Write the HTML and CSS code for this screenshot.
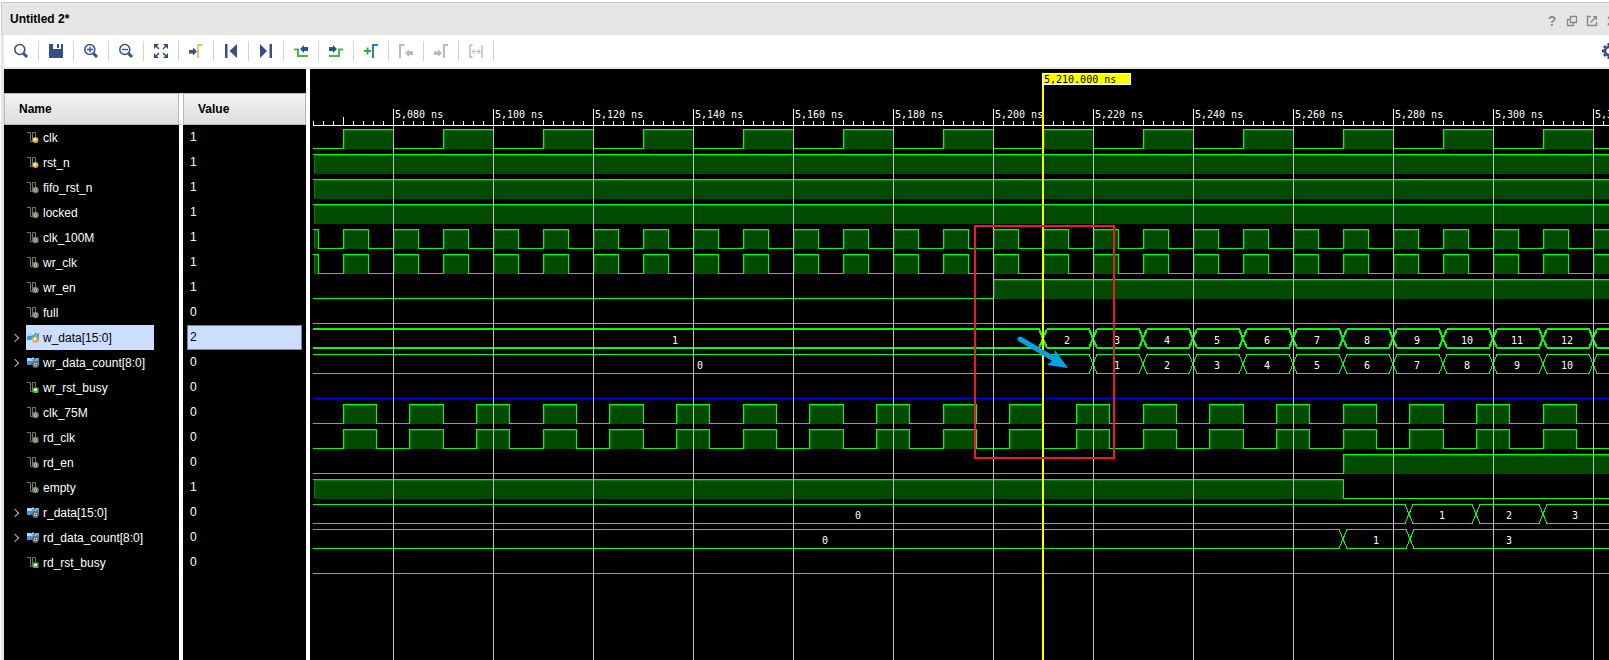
FILE: index.html
```html
<!DOCTYPE html>
<html lang="en">
<head>
<meta charset="utf-8">
<title>Untitled 2*</title>
<link rel="stylesheet" href="styles.css">
</head>
<body>
<svg class="defs" aria-hidden="true">
  <symbol id="wire" viewBox="0 0 12 12">
    <path d="M0 .5H3.500V9.500H6.500M5.500 9V.5H8.500V5" fill="none" stroke="#5f8550"/>
  </symbol>
  <symbol id="sig-in" viewBox="0 0 12 12">
    <use href="#wire"/><circle cx="8.500" cy="8" r="3" fill="#d9a441"/><circle cx="8" cy="7.500" r="1.500" fill="#fff0b8"/>
  </symbol>
  <symbol id="sig-int" viewBox="0 0 12 12">
    <use href="#wire"/><circle cx="8.500" cy="8" r="3.200" fill="#777"/><circle cx="8.500" cy="8" r="1.700" fill="#ccc"/><circle cx="8.500" cy="8" r=".8" fill="#333"/>
  </symbol>
  <symbol id="sig-out" viewBox="0 0 12 12">
    <use href="#wire"/><rect x="6" y="5.500" width="5.500" height="5.500" rx="1" fill="#55b04a"/><rect x="7" y="6.500" width="3" height="2.500" fill="#d9f5cf"/>
  </symbol>
  <symbol id="bus" viewBox="0 0 12 12">
    <path d="M0 1H4L6 3 8 1H12V8H8L6 6 4 8H0Z" fill="#3f9bd8"/><path d="M0 1H4L6 3.500 4 4H0Z" fill="#a5dcf8"/><path d="M5 1H7L6 2.500ZM7 5L11 1" fill="#fff" stroke="#dff3ff" stroke-width=".7"/>
  </symbol>
  <symbol id="bus-in" viewBox="0 0 12 12">
    <use href="#bus"/><circle cx="8.500" cy="7.500" r="3.200" fill="#e0a83c"/><circle cx="8" cy="7" r="1.600" fill="#fff0b8"/>
  </symbol>
  <symbol id="bus-int" viewBox="0 0 12 12">
    <use href="#bus"/><circle cx="8.500" cy="7.500" r="3.400" fill="#666"/><circle cx="8.500" cy="7.500" r="1.800" fill="#ccc"/><circle cx="8.500" cy="7.500" r=".8" fill="#333"/>
  </symbol>
</svg>

<main class="window">
  <header class="titlebar">
    <h1 class="title">Untitled 2*</h1>
    <div class="window-actions">
      <button class="win-btn help" aria-label="Help">?</button>
      <button class="win-btn" aria-label="Restore"><svg viewBox="0 0 12 12"><path d="M4.500 1.500H10.500V7.500H4.500ZM4 4.500H1.500V10.500H7.500V8" fill="none" stroke="#8a8a8a" stroke-width="1.300"/></svg></button>
      <button class="win-btn" aria-label="Float"><svg viewBox="0 0 12 12"><path d="M5 1.500H1.500V10.500H10.500V7M4.500 7.500L9 3" fill="none" stroke="#8a8a8a" stroke-width="1.500"/><path d="M6.500 1H11V5.500Z" fill="#8a8a8a"/></svg></button>
      <button class="win-btn" aria-label="Close"><svg viewBox="0 0 12 12"><path d="M2 2L10 10M10 2L2 10" stroke="#8a8a8a" stroke-width="2"/></svg></button>
    </div>
  </header>

  <div class="toolbar">
    <button class="tool" aria-label="Find"><svg viewBox="0 0 16 16"><circle cx="6.800" cy="6.500" r="5" fill="none" stroke="#34508a" stroke-width="1.600"/><path d="M10.500 10.500L14 14" stroke="#34508a" stroke-width="3"/></svg></button>
    <button class="tool" aria-label="Save"><svg viewBox="0 0 16 16"><path d="M1 1H5V6H13V1H15V15H1ZM9 1H11V5H9Z" fill="#34508a"/></svg></button>
    <button class="tool" aria-label="Zoom in"><svg viewBox="0 0 16 16"><circle cx="6.800" cy="6.500" r="5" fill="none" stroke="#34508a" stroke-width="1.500"/><path d="M10.500 10.500L14 14" stroke="#34508a" stroke-width="3"/><path d="M4 6.500H10M7 3.500V9.500" stroke="#34508a" stroke-width="1.300"/></svg></button>
    <button class="tool" aria-label="Zoom out"><svg viewBox="0 0 16 16"><circle cx="6.800" cy="6.500" r="5" fill="none" stroke="#34508a" stroke-width="1.500"/><path d="M10.500 10.500L14 14" stroke="#34508a" stroke-width="3"/><path d="M4 6.500H10" stroke="#34508a" stroke-width="1.300"/></svg></button>
    <button class="tool" aria-label="Zoom fit"><svg viewBox="0 0 16 16"><path d="M1 1H6L1 6ZM15 1V6L10 1ZM1 15V10L6 15ZM15 15H10L15 10Z" fill="#34508a"/><path d="M3 3L6 6M13 3L10 6M3 13L6 10M13 13L10 10" stroke="#34508a" stroke-width="1.500"/></svg></button>
    <button class="tool" aria-label="Go to cursor"><svg viewBox="0 0 16 16"><path d="M1 7H5V4.500L9 8.500 5 12.500V10.500H1Z" fill="#34508a"/><path d="M10 15V2H14.500" fill="none" stroke="#e0c765" stroke-width="2"/></svg></button>
    <button class="tool" aria-label="Go to start"><svg viewBox="0 0 16 16"><path d="M2 1H4.500V15H2ZM14 1V15L6.500 8Z" fill="#34508a"/></svg></button>
    <button class="tool" aria-label="Go to end"><svg viewBox="0 0 16 16"><path d="M14 1H11.500V15H14ZM2 1V15L9 8Z" fill="#34508a"/></svg></button>
    <button class="tool" aria-label="Previous transition"><svg viewBox="0 0 16 16"><path d="M1 6.500H5V13H15" fill="none" stroke="#48b83c" stroke-width="2"/><path d="M15 4V8H11V10L7 6 11 2V4Z" fill="#34508a"/></svg></button>
    <button class="tool" aria-label="Next transition"><svg viewBox="0 0 16 16"><path d="M1 13H11V6.500H15" fill="none" stroke="#48b83c" stroke-width="2"/><path d="M1 4V8H5V10L9 6 5 2V4Z" fill="#34508a"/></svg></button>
    <button class="tool" aria-label="Add marker"><svg viewBox="0 0 16 16"><path d="M1 8H8M4.500 4.500V11.500" stroke="#36a93c" stroke-width="2"/><path d="M10 15V2H15" fill="none" stroke="#2f7fb8" stroke-width="2"/></svg></button>
    <button class="tool" aria-label="Previous marker" disabled><svg viewBox="0 0 16 16"><path d="M2 15V2H6.500" fill="none" stroke="#bbb" stroke-width="2"/><path d="M15 8V12H11V14L7 10 11 6V8Z" fill="#bbb"/></svg></button>
    <button class="tool" aria-label="Next marker" disabled><svg viewBox="0 0 16 16"><path d="M11 15V2H15" fill="none" stroke="#bbb" stroke-width="2"/><path d="M1 8.500V12H5V14L9 10.300 5 6.500V8.500Z" fill="#bbb"/></svg></button>
    <button class="tool" aria-label="Swap cursors" disabled><svg viewBox="0 0 16 16"><path d="M2 2V15M4.500 2H2M4.500 14H2M14 2V15" fill="none" stroke="#bbb" stroke-width="1.500"/><path d="M4 8.500H12M6.500 6L4 8.500 6.500 11M10 6L12.500 8.500 10 11" fill="none" stroke="#bbb"/></svg></button>
    <button class="settings" aria-label="Settings"><svg viewBox="0 0 16 16"><circle cx="8" cy="8" r="4" fill="none" stroke="#34508a" stroke-width="2.500"/><path d="M8 0V3M8 13V16M1 8H3M13 8H15M3 3L4.500 4.500M11.500 11.500L13 13M3 13L4.500 11.500M13 3L11.500 4.500" stroke="#34508a" stroke-width="3"/></svg></button>
  </div>

  <div class="workspace">
    <section class="signals">
      <table class="signal-table">
        <thead><tr><th scope="col">Name</th><th scope="col">Value</th></tr></thead>
        <tbody>
          <tr><td><div class="name"><svg><use href="#sig-in"/></svg>clk</div></td><td><div class="value">1</div></td></tr>
          <tr><td><div class="name"><svg><use href="#sig-in"/></svg>rst_n</div></td><td><div class="value">1</div></td></tr>
          <tr><td><div class="name"><svg><use href="#sig-int"/></svg>fifo_rst_n</div></td><td><div class="value">1</div></td></tr>
          <tr><td><div class="name"><svg><use href="#sig-int"/></svg>locked</div></td><td><div class="value">1</div></td></tr>
          <tr><td><div class="name"><svg><use href="#sig-int"/></svg>clk_100M</div></td><td><div class="value">1</div></td></tr>
          <tr><td><div class="name"><svg><use href="#sig-int"/></svg>wr_clk</div></td><td><div class="value">1</div></td></tr>
          <tr><td><div class="name"><svg><use href="#sig-int"/></svg>wr_en</div></td><td><div class="value">1</div></td></tr>
          <tr><td><div class="name"><svg><use href="#sig-int"/></svg>full</div></td><td><div class="value">0</div></td></tr>
          <tr class="selected"><td><div class="cell"><button class="expand" aria-label="Expand w_data"></button><div class="name"><svg><use href="#bus-in"/></svg>w_data[15:0]</div></div></td><td><div class="value">2</div></td></tr>
          <tr><td><div class="cell"><button class="expand" aria-label="Expand wr_data_count"></button><div class="name"><svg><use href="#bus-int"/></svg>wr_data_count[8:0]</div></div></td><td><div class="value">0</div></td></tr>
          <tr><td><div class="name"><svg><use href="#sig-out"/></svg>wr_rst_busy</div></td><td><div class="value">0</div></td></tr>
          <tr><td><div class="name"><svg><use href="#sig-int"/></svg>clk_75M</div></td><td><div class="value">0</div></td></tr>
          <tr><td><div class="name"><svg><use href="#sig-int"/></svg>rd_clk</div></td><td><div class="value">0</div></td></tr>
          <tr><td><div class="name"><svg><use href="#sig-int"/></svg>rd_en</div></td><td><div class="value">0</div></td></tr>
          <tr><td><div class="name"><svg><use href="#sig-int"/></svg>empty</div></td><td><div class="value">1</div></td></tr>
          <tr><td><div class="cell"><button class="expand" aria-label="Expand r_data"></button><div class="name"><svg><use href="#bus-int"/></svg>r_data[15:0]</div></div></td><td><div class="value">0</div></td></tr>
          <tr><td><div class="cell"><button class="expand" aria-label="Expand rd_data_count"></button><div class="name"><svg><use href="#bus-int"/></svg>rd_data_count[8:0]</div></div></td><td><div class="value">0</div></td></tr>
          <tr><td><div class="name"><svg><use href="#sig-out"/></svg>rd_rst_busy</div></td><td><div class="value">0</div></td></tr>
          <tr class="filler"><td></td><td></td></tr>
        </tbody>
      </table>
    </section>
    <section class="waves" id="waves" aria-label="Waveforms">
      <svg class="ruler" id="ruler"></svg>
      <div class="tracks" id="tracks"></div>
      <svg class="grid" id="grid"></svg>
      <div class="cursor"><span class="cursor-label">5,210.000 ns</span></div>
      <div class="callout"></div>
      <svg class="arrow" viewBox="0 0 52 36"><path d="M4 5L38 25" stroke="#00a2e8" stroke-width="5" stroke-linecap="round"/><path d="M52 34L39 16 38 23 35 28 31 31Z" fill="#00a2e8"/></svg>
    </section>
  </div>
</main>
<script src="waves.js"></script>
</body>
</html>
```
FILE: styles.css
```css
* { box-sizing: border-box; }

body {
  margin: 0;
  background: #fff;
  color: #000;
  font: 12px/16px "Liberation Sans", Arial, sans-serif;
}

button {
  margin: 0;
  padding: 0;
  border: 0;
  background: none;
  font: inherit;
}

.defs { position: absolute; width: 0; height: 0; }

.window {
  display: flex;
  flex-direction: column;
  height: 100vh;
  overflow: hidden;
  padding: 2px 0 0 1px;
}

.titlebar {
  display: flex;
  flex: none;
  align-items: center;
  justify-content: space-between;
  height: 33px;
  padding-left: 8px;
  background: #e6e6e6;
  border-top: 1px solid #c8c8c8;
  border-left: 1px solid #c8c8c8;
}

.title { margin: 0; font-size: 12px; line-height: 16px; }

.window-actions { display: flex; margin: 4px -13px 0 0; }

.win-btn {
  display: flex;
  align-items: center;
  justify-content: center;
  width: 20px;
  height: 20px;
  color: #8a8a8a;
}
.win-btn svg { width: 12px; height: 12px; }
.help { font-size: 14px; font-weight: bold; }

.toolbar {
  display: flex;
  flex: none;
  align-items: center;
  height: 34px;
  background: #fff;
  border-left: 3px solid #e6e6e6;
  border-bottom: 2px solid #e6e6e6;
}

.tool {
  display: flex;
  align-items: center;
  justify-content: center;
  width: 35px;
  height: 20px;
  border-right: 1px solid #d4d4d4;
}
.tool svg, .settings svg { display: block; width: 16px; height: 16px; }
.settings { margin: 0 -8px 0 auto; }

.workspace {
  display: flex;
  flex: 1;
  min-height: 0;
  border-left: 3px solid #e6e6e6;
}

.signals {
  flex: none;
  width: 302px;
  padding-top: 24px;
  background: #000;
  color: #fff;
}

.signal-table {
  width: 100%;
  height: 100%;
  table-layout: fixed;
  border-collapse: separate;
  border-spacing: 0;
}
.signal-table th {
  width: 123px;
  height: 32px;
  padding: 0 14px;
  color: #000;
  text-align: left;
  background: linear-gradient(#f3f3f3, #dedee0);
  border: 1px solid #b8b8b8;
}
.signal-table th:first-child {
  width: 179px;
  background-clip: padding-box;
  box-shadow: inset -1px 0 #b8b8b8;
}
.signal-table td { height: 25px; padding: 0; }
.signal-table th:first-child, .signal-table td:first-child { border-right: 4px solid #fff; }
.signal-table .filler td { height: auto; }

.cell { display: flex; align-items: center; }
.name {
  display: flex;
  align-items: center;
  gap: 4px;
  width: 128px;
  height: 25px;
  margin-left: 22px;
  padding-left: 1px;
  white-space: nowrap;
}
.name svg { flex: none; width: 12px; height: 12px; }
.cell .name { margin-left: 0; }
.expand {
  display: flex;
  align-items: center;
  width: 22px;
  height: 25px;
  padding-left: 8px;
}
.expand::before {
  content: "";
  width: 5px;
  height: 5px;
  border: solid #b4b4b4;
  border-width: 1px 1px 0 0;
  transform: rotate(45deg);
}
.value {
  height: 25px;
  margin: 0 4px;
  padding: 0 2px;
  line-height: 23px;
  border: 1px solid transparent;
}
.selected .name { color: #000; background: #ccdeff; }
.selected .value { color: #000; background: #ccdeff; border-color: #4a90c4; }

.waves {
  position: relative;
  flex: 1;
  min-width: 0;
  margin-left: 4px;
  overflow: hidden;
  background: #000;
  font: 10px/12px "DejaVu Sans Mono", monospace;
}
.waves svg { display: block; }
.ruler { width: 100%; height: 57px; fill: #fff; shape-rendering: crispEdges; }
.track { width: 100%; height: 25px; shape-rendering: crispEdges; }
.track text { fill: #fff; text-anchor: middle; }
.mask { fill: #000; }
.fill { fill: #004b00; }
.shade { fill: #008000; }
.line { fill: none; stroke: #0f0; }
.line.bold { stroke-width: 2; }
.line.idle { stroke: #00f; }

.grid {
  position: absolute;
  top: 57px;
  left: 0;
  width: 100%;
  height: calc(100% - 57px);
  fill: #c0c0c0;
  shape-rendering: crispEdges;
}

.cursor {
  position: absolute;
  top: 4px;
  bottom: 0;
  left: 732px;
  width: 2px;
  background: #ff0;
}
.cursor-label {
  display: block;
  width: 89px;
  height: 12px;
  padding-left: 1px;
  color: #000;
  line-height: 11px;
  white-space: nowrap;
  background: #ff0;
  border: 1px solid #fff;
}

.callout {
  position: absolute;
  top: 156px;
  left: 664px;
  width: 141px;
  height: 234px;
  border: 2px solid #ed1c24;
}

.arrow {
  position: absolute;
  top: 265px;
  left: 706px;
  width: 52px;
  height: 36px;
}
```
FILE: waves.js
```js
const SVG = 'http://www.w3.org/2000/svg';
const PX_PER_NS = 5;
const LEFT = 3;
const HIGH = 3;
const LOW = 22;

const panel = document.getElementById('waves');
const timeToX = t => Math.floor(83 + (t - 5080) * PX_PER_NS + 0.01);

const clock = (period, duty) => ({ kind: 'clock', period, duty });
const level = (value, changeAt) => ({ kind: 'level', value, changeAt });
const counter = (first, start) => {
  const steps = [[0, first]];
  for (let i = 1; i < 100; i++) steps.push([start + (i - 1) * 10, first + i]);
  return steps;
};

const tracks = [
  clock(20, 10),
  level(1),
  level(1),
  level(1),
  clock(10, 5),
  clock(10, 5),
  level(0, 5200),
  level(0),
  { kind: 'bus', bold: true, steps: counter(1, 5210) },
  { kind: 'bus', steps: counter(0, 5220) },
  { kind: 'idle' },
  clock(40 / 3, 20 / 3),
  clock(40 / 3, 20 / 3),
  level(0, 5270),
  level(1, 5270),
  { kind: 'bus', steps: [[0, 0], [5283.334, 1], [5296.667, 2], [5310, 3]] },
  { kind: 'bus', steps: [[0, 0], [5270, 1], [5283.4, 3]] },
  level(0)
];

function add(parent, tag, attrs, text) {
  const node = document.createElementNS(SVG, tag);
  for (const key in attrs) node.setAttribute(key, attrs[key]);
  if (text !== undefined) node.textContent = text;
  parent.appendChild(node);
  return node;
}

function rect(parent, x, y, width, height, cls) {
  if (width > 0) add(parent, 'rect', { x, y, width, height, class: cls || '' });
}

function highSpans(track, width) {
  if (track.kind === 'level') {
    const change = track.changeAt ? timeToX(track.changeAt) : width + 10;
    return track.value ? [[LEFT, change]] : [[change, width + 10]];
  }
  const spans = [];
  for (let n = -2; ; n++) {
    const rise = 5070 + n * track.period;
    const start = timeToX(rise);
    if (start > width) return spans;
    const end = timeToX(rise + track.duty);
    if (end > LEFT) spans.push([Math.max(start, LEFT), end]);
  }
}

function drawLevels(svg, track, width) {
  let path = '';
  let x = LEFT;
  let high = false;
  for (const [start, end] of highSpans(track, width)) {
    rect(svg, start + 1, HIGH + 1, end - start - 1, LOW - HIGH, 'fill');
    rect(svg, start + 1, HIGH + 1, end - start - 1, 1, 'shade');
    rect(svg, start + 1, HIGH + 1, 1, LOW - HIGH - 1, 'shade');
    if (start > LEFT) path += `M${x} ${LOW + 0.5}H${start + 0.5}V${HIGH + 0.5}`;
    else path += `M${LEFT} ${HIGH + 0.5}`;
    path += `H${end + 0.5}V${LOW + 0.5}`;
    x = end;
    high = true;
  }
  path += `M${x} ${LOW + 0.5}H${width + 10}`;
  if (high && x > width) path = path.replace(/M[^M]*$/, '');
  add(svg, 'path', { d: path, class: 'line' });
}

function drawBus(svg, track, width) {
  const offset = track.bold ? 0 : 0.5;
  const top = HIGH + offset;
  const bottom = LOW + offset;
  let path = '';
  track.steps.forEach(([time, value], i) => {
    const first = i === 0;
    const start = first ? LEFT : timeToX(time);
    const next = track.steps[i + 1];
    const end = next ? timeToX(next[0]) : width + 20;
    if (start > width) return;
    const a = first ? start : start + 4;
    path += `M${a} ${top}H${end - 4}L${end + 4} ${bottom}M${a} ${bottom}H${end - 4}L${end + 4} ${top}`;
    const from = first ? -2 : start;
    const to = Math.min(end, width);
    if (to - from > 20) add(svg, 'text', { x: Math.round((from + to) / 2) - 1, y: 18 }, value);
  });
  add(svg, 'path', { d: path, class: track.bold ? 'line bold' : 'line' });
}

function draw() {
  const width = panel.clientWidth;
  const ruler = document.getElementById('ruler');
  const grid = document.getElementById('grid');
  const list = document.getElementById('tracks');
  ruler.replaceChildren();
  grid.replaceChildren();
  list.replaceChildren();

  rect(ruler, LEFT, 56, width, 1);
  for (let x = LEFT, n = 0; x < width; x += 10, n++) {
    const mid = n % 5 === 3;
    rect(ruler, x, mid ? 48 : 52, 1, mid ? 8 : 4);
  }
  for (let t = 5080; timeToX(t) < width; t += 20) {
    const x = timeToX(t);
    rect(ruler, x + 1, 39, 51, 12, 'mask');
    rect(ruler, x, 40, 1, 16);
    add(ruler, 'text', { x: x + 2, y: 49 }, `5,${t - 5000 < 100 ? '0' : ''}${t - 5000} ns`);
    rect(grid, x, 0, 1, '100%');
  }

  for (const track of tracks) {
    const svg = add(list, 'svg', { class: 'track' });
    if (track.kind === 'bus') drawBus(svg, track, width);
    else if (track.kind === 'idle') add(svg, 'path', { d: `M${LEFT} ${LOW + 0.5}H${width}`, class: 'line idle' });
    else drawLevels(svg, track, width);
  }
}

draw();
window.addEventListener('resize', draw);
```
